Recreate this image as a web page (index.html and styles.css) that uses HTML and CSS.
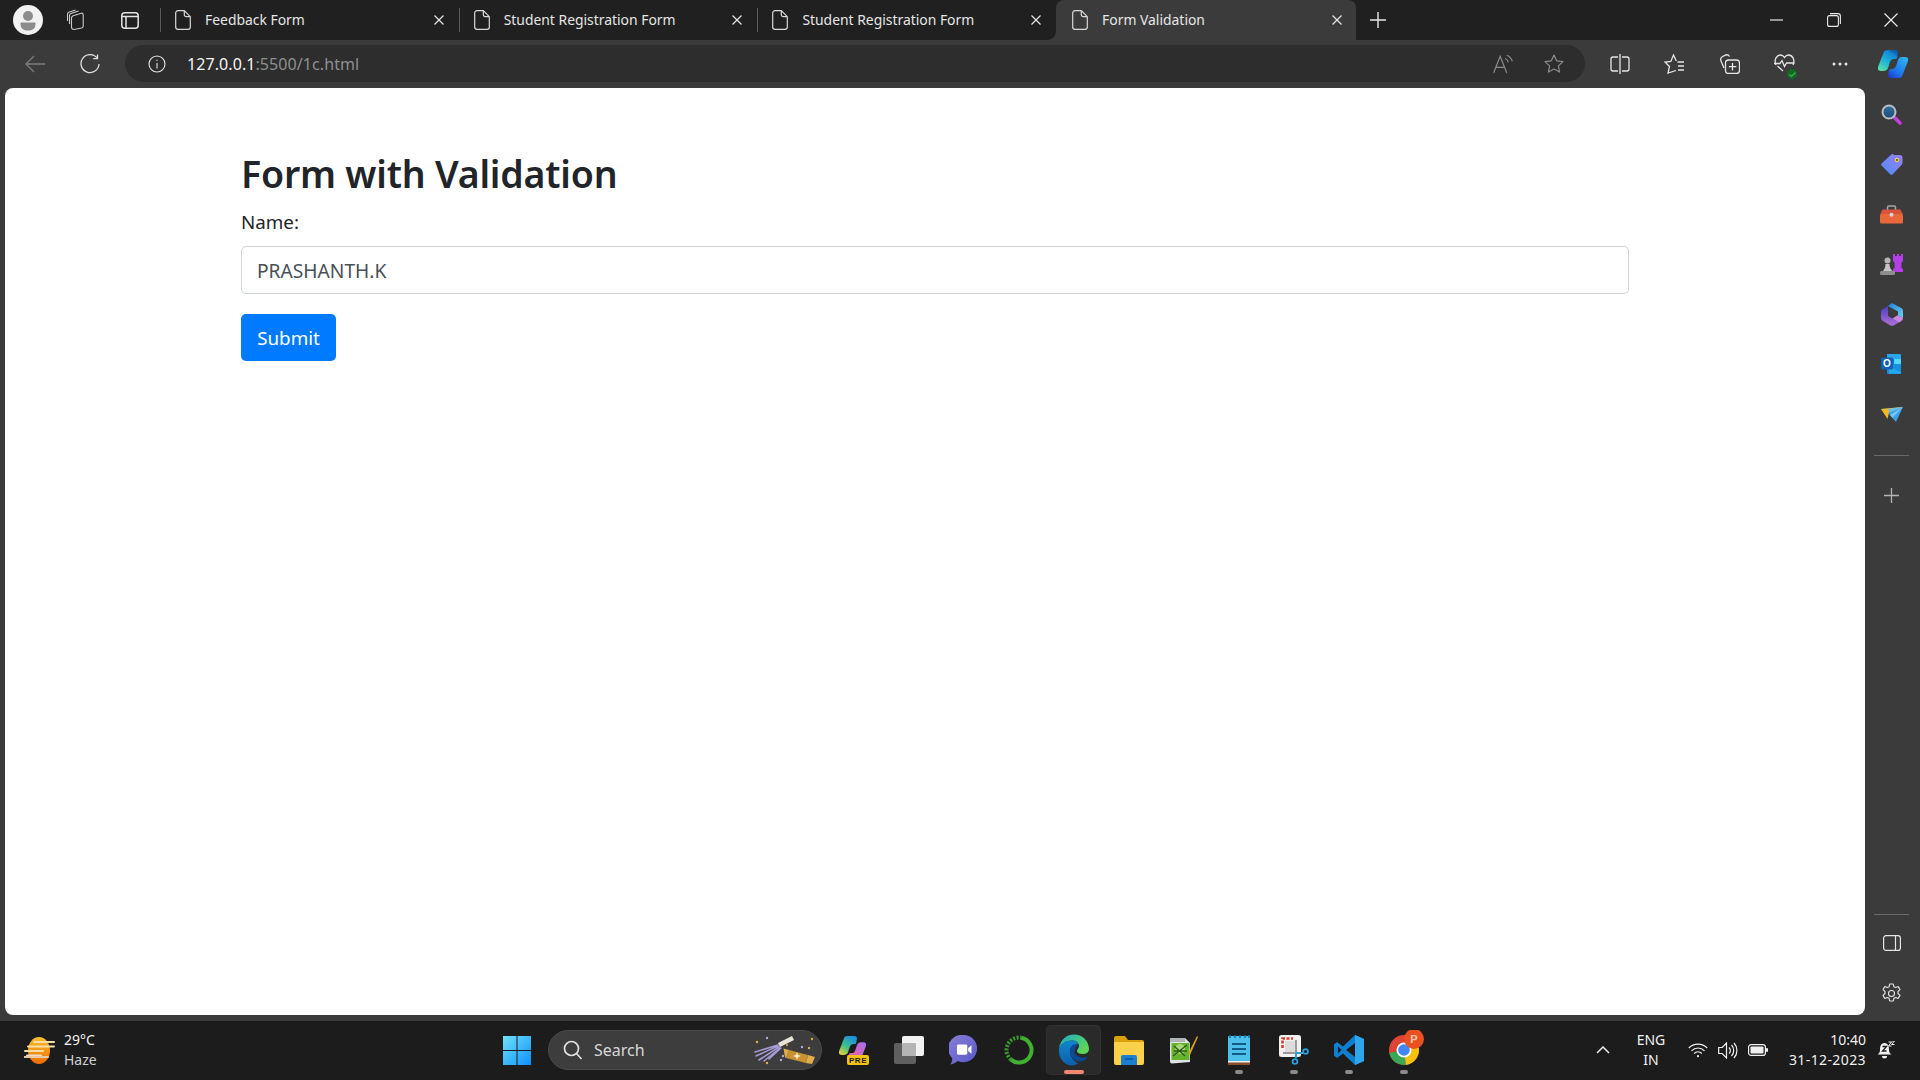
FILE: index.html
```html
<!DOCTYPE html>
<html lang="en">
<head>
<meta charset="utf-8">
<title>Form Validation</title>
<link rel="stylesheet" href="styles.css">
</head>
<body>
<svg class="sprite" aria-hidden="true">
  <symbol id="doc" viewBox="0 0 16 20"><path d="M3 .7h6.300l6 6V17a2.300 2.300 0 0 1-2.300 2.300H3A2.300 2.300 0 0 1 .7 17V3A2.300 2.300 0 0 1 3 .7ZM9.300 .7v4a2 2 0 0 0 2 2h4" fill="none" stroke="#d8d8d8" stroke-width="1.200"/></symbol>
  <symbol id="x" viewBox="0 0 10 10"><path d="M.5.5l9 9M9.500.5l-9 9" fill="none" stroke="#e6e6e6" stroke-width="1.200"/></symbol>
</svg>

<header class="tabstrip">
  <div class="avatar"><svg width="30" height="30" viewBox="0 0 30 30"><circle cx="15" cy="15" r="15" fill="#f2f2f2"/><circle cx="15" cy="11" r="5" fill="#8c8c8c"/><path d="M7.500 17.500h15v2a6 6 0 0 1-6 6h-3a6 6 0 0 1-6-6Z" fill="#8c8c8c"/></svg></div>
  <div class="strip-btn"><svg width="22" height="22" viewBox="0 0 22 22" fill="none" stroke="#c9c9c9" stroke-width="1.100"><path d="M8 20.500c-1.500 0-2.500-1-2.500-2.500V9c0-1.200.8-2 1.700-2.300l8-2.500c1-.3 2 .5 2 1.700v11c0 1-.6 1.800-1.500 2.100Z"/><path d="M3.500 15V6.500c0-1 .6-1.700 1.400-2l7.600-2.600M1.500 12V5c0-1 .5-1.500 1.300-1.800L9.500 1"/></svg></div>
  <div class="strip-btn narrow"><svg width="18" height="17" viewBox="0 0 18 17" fill="none" stroke="#e4e4e4" stroke-width="1.500"><rect x=".8" y=".8" width="16.400" height="15.400" rx="3"/><path d="M.8 4.500h16.400M5 4.500v11.700"/></svg></div>

  <div class="tab">
    <svg class="doc" width="16" height="20"><use href="#doc"/></svg>
    <span class="tab-title">Feedback Form</span>
    <svg class="tab-x" width="10" height="10"><use href="#x"/></svg>
  </div>
  <div class="tab">
    <svg class="doc" width="16" height="20"><use href="#doc"/></svg>
    <span class="tab-title">Student Registration Form</span>
    <svg class="tab-x" width="10" height="10"><use href="#x"/></svg>
  </div>
  <div class="tab">
    <svg class="doc" width="16" height="20"><use href="#doc"/></svg>
    <span class="tab-title">Student Registration Form</span>
    <svg class="tab-x" width="10" height="10"><use href="#x"/></svg>
  </div>
  <div class="tab active">
    <svg class="doc" width="16" height="20"><use href="#doc"/></svg>
    <span class="tab-title">Form Validation</span>
    <svg class="tab-x" width="10" height="10"><use href="#x"/></svg>
  </div>
  <div class="newtab"><svg width="16" height="16" viewBox="0 0 16 16"><path d="M8 0v16M0 8h16" stroke="#e8e8e8" stroke-width="1.400"/></svg></div>

  <div class="winctl">
    <div class="winbtn"><svg width="13" height="2" viewBox="0 0 13 2"><path d="M0 1h13" stroke="#e8e8e8" stroke-width="1.200"/></svg></div>
    <div class="winbtn"><svg width="14" height="14" viewBox="0 0 14 14" fill="none" stroke="#e8e8e8" stroke-width="1.100"><rect x=".6" y="2.600" width="10.800" height="10.800" rx="2"/><path d="M3 .6h8a2.400 2.400 0 0 1 2.400 2.400v8"/></svg></div>
    <div class="winbtn"><svg width="14" height="14" viewBox="0 0 14 14"><path d="M.5.500l13 13M13.500.5l-13 13" stroke="#e8e8e8" stroke-width="1.200"/></svg></div>
  </div>
</header>

<nav class="toolbar">
  <div class="tool"><svg width="20" height="18" viewBox="0 0 20 18" fill="none" stroke="#7d7d7d" stroke-width="1.300"><path d="M20 9H1M9 1 1 9l8 8"/></svg></div>
  <div class="tool"><svg width="20" height="20" viewBox="0 0 20 20" fill="none" stroke="#dcdcdc" stroke-width="1.300"><path d="M17.200 4.200A9 9 0 1 0 19 10"/><path d="M17.500 .5v4.200h-4.300"/></svg></div>
  <div class="addr">
    <svg class="info" width="18" height="18" viewBox="0 0 18 18" fill="none" stroke="#e6e6e6" stroke-width="1.100"><circle cx="9" cy="9" r="8"/><path d="M9 8v5.500M9 4.700v1.300"/></svg>
    <span class="url"><span class="host">127.0.0.1</span><span class="path">:5500/1c.html</span></span>
    <div class="addr-btn push"><svg width="22" height="20" viewBox="0 0 20 18" fill="none" stroke="#8c8c8c" stroke-width="1.100"><path d="M.6 17 6.500 2 12.500 17M2.700 12h7.700"/><path d="M11 4a5 5 0 0 1 3 3.500M12.500 1a8 8 0 0 1 5 5.500"/></svg></div>
    <div class="addr-btn"><svg width="20" height="19" viewBox="0 0 20 19" fill="none" stroke="#8c8c8c" stroke-width="1.200"><path d="m10 1 2.700 5.800 6.300.8-4.600 4.300 1.200 6.200L10 15l-5.600 3.100 1.200-6.200L1 7.600l6.300-.8Z" stroke-linejoin="round"/></svg></div>
  </div>
  <div class="tool first"><svg width="20" height="20" viewBox="0 0 20 20" fill="none" stroke="#e6e6e6" stroke-width="1.300"><path d="M8 3H3a2 2 0 0 0-2 2v10a2 2 0 0 0 2 2h5M12 3h5a2 2 0 0 1 2 2v10a2 2 0 0 1-2 2h-5M10 0v20"/></svg></div>
  <div class="tool"><svg width="21" height="20" viewBox="0 0 21 20" fill="none" stroke="#e6e6e6" stroke-width="1.300"><path d="M12 16.500 4 19l1.500-6.500L1 8l5.800-.6L9.500 1l2.800 6"/><path d="M13.500 8H20M14 12h6M14 16h6"/></svg></div>
  <div class="tool"><svg width="21" height="21" viewBox="0 0 21 21" fill="none" stroke="#e6e6e6" stroke-width="1.300"><path d="M5 15 2.200 8.500c-1-2.300-.6-4 1.300-5L6 2.300c1.600-.8 3.500-.4 4.500 1.200"/><rect x="6.500" y="7" width="14" height="13.500" rx="3"/><path d="M13.500 10v7.500M9.800 13.700h7.500"/></svg></div>
  <div class="tool"><svg width="21" height="20" viewBox="0 0 21 20" fill="none" stroke="#e6e6e6" stroke-width="1.300"><path d="M2 11C-.5 5.500 3 1 6.500 1c2 0 3 1 4 2.500C11.500 2 12.500 1 14.500 1 18 1 21.500 5.500 19 11"/><path d="M0 9.500h6l2-3 2.500 6 2-3.500h8M3.500 12l5.500 5"/></svg><span class="ok"><svg width="9" height="9" viewBox="0 0 9 9"><path d="m1.500 4.500 2 2 4-4" fill="none" stroke="#4fa35b" stroke-width="1.100"/></svg></span></div>
  <div class="tool"><svg width="16" height="4" viewBox="0 0 16 4" fill="#e6e6e6"><circle cx="2" cy="2" r="1.500"/><circle cx="8" cy="2" r="1.500"/><circle cx="14" cy="2" r="1.500"/></svg></div>
  <div class="tool copilot"><svg width="31" height="28" viewBox="0 0 31 28">
    <defs>
      <linearGradient id="cpA" x1=".1" y1="1" x2=".7" y2="0"><stop offset="0" stop-color="#5fe3a1"/><stop offset=".45" stop-color="#1fb5d6"/><stop offset=".85" stop-color="#1189d8"/><stop offset="1" stop-color="#0b5fb0"/></linearGradient>
      <linearGradient id="cpB" x1=".1" y1="1" x2=".8" y2="0"><stop offset="0" stop-color="#2337c6"/><stop offset=".3" stop-color="#1b6fe8"/><stop offset="1" stop-color="#2fb0f5"/></linearGradient>
    </defs>
    <path d="M6 1.500Q7 0 10 0h7q3 0 3 3l-1 5q-.5 1-2 1h-1q-3 0-4 3l-2 6q-1 3-5 3H3q-4 0-3-4Z" fill="url(#cpA)"/>
    <path d="M24 26.500q-1 1.500-4 1.500h-7q-3 0-3-3l1-5q.5-1 2-1h1q3 0 4-3l2-6q1-3 4-3h3q4 0 3 4Z" fill="url(#cpB)"/>
  </svg></div>
</nav>

<div class="main">
  <main class="page">
    <div class="container">
      <h2 class="title">Form with Validation</h2>
      <form class="form">
        <label class="label" for="name">Name:</label>
        <input class="control" id="name" type="text" value="PRASHANTH.K">
        <button class="submit" type="button">Submit</button>
      </form>
    </div>
  </main>
  <aside class="rail">
    <div class="rail-item"><svg width="21" height="21" viewBox="0 0 21 21"><defs><linearGradient id="lens" x1="0" y1="0" x2="0" y2="1"><stop offset="0" stop-color="#2f6f9e"/><stop offset="1" stop-color="#194c78"/></linearGradient></defs><path d="m13 13 6 6" stroke="#c53fdc" stroke-width="3.600" stroke-linecap="round"/><circle cx="8" cy="8" r="6.500" fill="url(#lens)" stroke="#b9bcc0" stroke-width="2"/></svg></div>
    <div class="rail-item"><svg width="22" height="21" viewBox="0 0 22 21"><defs><linearGradient id="tag" x1="0" y1="1" x2="1" y2="0"><stop offset="0" stop-color="#4c8df6"/><stop offset="1" stop-color="#9a7ff2"/></linearGradient></defs><path d="M12.500 1H19a2.500 2.500 0 0 1 2.500 2.500V9a3 3 0 0 1-1 2l-8.500 9a2 2 0 0 1-3 0l-8-8a2 2 0 0 1 0-3l8.500-7.800a3 3 0 0 1 3-1.200Z" fill="url(#tag)"/><circle cx="16" cy="6" r="2.200" fill="#f6cf3f"/><circle cx="16" cy="6" r=".9" fill="#3b3b3b"/></svg></div>
    <div class="rail-item"><svg width="23" height="19" viewBox="0 0 23 19"><path d="M7.500 5V2.500C7.500 1.500 8 1 9 1h5c1 0 1.500.5 1.500 1.500V5" fill="none" stroke="#a5a5a5" stroke-width="1.600"/><path d="M2.500 4.500h18L23 9.500H0Z" fill="#d8533a"/><rect y="9" width="23" height="9.500" rx="1.500" fill="#e8683c"/><circle cx="11.500" cy="9.800" r="2" fill="#d5d5d5"/></svg></div>
    <div class="rail-item"><svg width="23" height="23" viewBox="0 0 23 23"><path d="M13 1h2v2h2V1h2v2h2V1h2v7l-1.500 1.500V15l1.500 1v3H13v-3l1.500-1V9.500L13 8Z" fill="#b33fe6"/><circle cx="7.500" cy="7.500" r="3" fill="#b5b5b5"/><path d="M5.500 11h4c0 3 1 5 3 7H3c1.500-2 2.500-4 2.500-7Z" fill="#c4c4c4"/><rect y="18" width="15" height="4" rx="1.500" fill="#8e8e8e"/></svg></div>
    <div class="rail-item"><svg width="22" height="23" viewBox="0 0 22 23"><defs><linearGradient id="m1" x1="0" y1="0" x2="1" y2="1"><stop offset="0" stop-color="#1f7fdc"/><stop offset="1" stop-color="#6dd4f2"/></linearGradient><linearGradient id="m2" x1="0" y1="0" x2="0" y2="1"><stop offset="0" stop-color="#4a3fc4"/><stop offset="1" stop-color="#b16fd6"/></linearGradient></defs><path d="M11 0 20 5c1.300.7 2 1.800 2 3v7l-5-3V8.500L7 3Z" fill="url(#m1)"/><path d="M7 3 2 6C.7 6.800 0 8 0 9.500v5c0 1.500.7 2.700 2 3.500l7 4.200c1.200.7 2.700.7 4 0l5-3L7 13Z" fill="url(#m2)"/><path d="M17 12 22 15c0 1.500-.7 2.500-2 3.200l-2 1.200L11.500 15.500Z" fill="#c98be0"/></svg></div>
    <div class="rail-item"><svg width="21" height="20" viewBox="0 0 21 20"><path d="M6 0h12.500c1 0 1.500.5 1.500 1.500V6H6Z" fill="#28a8ea"/><path d="M6 5h7v5H6Z" fill="#0078d4"/><path d="M13 5h7v5h-7Z" fill="#50d9ff"/><path d="M6 10h14v10H7.500c-1 0-1.500-.5-1.500-1.500Z" fill="#1490df"/><path d="m8 13 12 5v1.500H8Z" fill="#28a8ea"/><rect y="3.500" width="12" height="12" rx="1.500" fill="#0f62b5"/><text class="ol-letter" x="6" y="13">O</text></svg></div>
    <div class="rail-item"><svg width="22" height="15" viewBox="0 0 22 15"><path d="M0 2 22 0 15 15 9 8Z" fill="#3b9fe8"/><path d="M22 0 9 8l2.500 3Z" fill="#75c5f7"/><path d="M0 2 22 0 8 5 6.500 12Z" fill="#f3b922"/><path d="M22 0 9 5.500 7 2Z" fill="#66bcf5"/></svg></div>
    <div class="rail-rule one"></div>
    <div class="rail-plus"><svg width="15" height="15" viewBox="0 0 15 15"><path d="M7.500 0v15M0 7.500h15" stroke="#b4b4b4" stroke-width="1.300"/></svg></div>
    <div class="rail-rule two"></div>
    <div class="rail-low"><svg width="18" height="16" viewBox="0 0 18 16" fill="none" stroke="#e4e4e4" stroke-width="1.200"><rect x=".6" y=".6" width="16.800" height="14.800" rx="2.500"/><path d="M12.500.6v14.800"/></svg></div>
    <div class="rail-low last"><svg width="21" height="21" viewBox="0 0 21 21" fill="none" stroke="#e4e4e4" stroke-width="1.100"><circle cx="10.500" cy="10.500" r="3"/><path d="M8.700 1h3.600l.6 2.700 1.800.9 2.500-1 1.800 3-2 1.900v2l2 1.900-1.800 3-2.500-1-1.800.9-.6 2.700H8.700l-.6-2.700-1.800-.9-2.500 1-1.800-3 2-1.900v-2l-2-1.900 1.800-3 2.500 1 1.800-.9Z" stroke-linejoin="round"/></svg></div>
  </aside>
</div>

<footer class="taskbar">
  <div class="weather">
    <svg width="31" height="27" viewBox="0 0 31 27"><defs><linearGradient id="sun" x1="0" y1="0" x2="0" y2="1"><stop offset="0" stop-color="#fbc02d"/><stop offset="1" stop-color="#ef6c00"/></linearGradient></defs><ellipse cx="15" cy="13.500" rx="11" ry="13.500" fill="url(#sun)"/><g stroke-linecap="round" stroke-width="2"><path d="M10 5h20M4 9.500h26M1 14h18" stroke="#f6dfa6"/><path d="M3 18.500h14" stroke="#efe1c4"/><path d="M0 20h24" stroke="#e8c9a0"/></g></svg>
    <div class="w-text"><span>29°C</span><span class="w-sub">Haze</span></div>
  </div>
  <div class="center">
    <div class="slot"><svg width="28" height="29" viewBox="0 0 28 29"><defs><linearGradient id="win" x1="0" y1="0" x2="1" y2="1"><stop offset="0" stop-color="#6fe2fb"/><stop offset="1" stop-color="#0f8ffa"/></linearGradient></defs><path d="M0 0h13.500v14H0ZM14.500 0H28v14H14.500ZM0 15h13.500v14H0ZM14.500 15H28v14H14.500Z" fill="url(#win)"/></svg></div>
    <div class="search">
      <svg width="20" height="20" viewBox="0 0 20 20" fill="none" stroke="#e0e0e0" stroke-width="1.700"><circle cx="8.500" cy="8.500" r="7"/><path d="m13.500 13.500 5 5.500"/></svg>
      <span class="search-text">Search</span>
      <svg class="doodle" width="82" height="40" viewBox="0 0 82 40">
        <g stroke="#a79bd6" stroke-width="1.500" stroke-linecap="round"><path d="M38 15 15 22M38 16 16 26M39 17 19 30M40 18 24 31M41 18 29 29"/></g>
        <path d="M53 8 39 15" stroke="#e8e2d8" stroke-width="4.500"/>
        <path d="M49 20 68 25 66 33 46 28Z" fill="#c9912f"/>
        <path d="M49 20 43.500 18.500 45 27 46 28ZM68 25 75 27 72 34 66 33Z" fill="#e0ad4a"/>
        <path d="m57 22 1 3 3 1-3 1-1 3-1-3-3-1 3-1Z" fill="#fbf2d6"/>
        <g fill="#e0ad4a"><circle cx="17" cy="12" r="1.200"/><circle cx="72" cy="9" r="1.200"/><circle cx="69" cy="18" r="1.200"/><circle cx="27" cy="33" r="1.200"/><circle cx="47" cy="15" r="1"/></g>
        <g fill="#b7a8d8"><circle cx="27" cy="8" r="1.200"/><circle cx="62" cy="17" r="1.200"/><circle cx="43" cy="26" r="1.200"/><circle cx="41" cy="30" r="1.200"/></g>
      </svg>
    </div>
    <div class="slot first-app"><svg width="30" height="29" viewBox="0 0 30 29"><defs><linearGradient id="cp2" x1=".1" y1="1" x2=".7" y2="0"><stop offset="0" stop-color="#f4d02a"/><stop offset=".45" stop-color="#3fc28a"/><stop offset="1" stop-color="#1a8fe0"/></linearGradient><linearGradient id="cp3" x1=".1" y1="1" x2=".9" y2="0"><stop offset="0" stop-color="#f0608f"/><stop offset="1" stop-color="#a96ef0"/></linearGradient></defs><g transform="scale(.9)"><path d="M6 1.500Q7 0 10 0h7q3 0 3 3l-1 5q-.5 1-2 1h-1q-3 0-4 3l-2 6q-1 3-5 3H3q-4 0-3-4Z" fill="url(#cp2)"/><path d="M24 26.500q-1 1.500-4 1.500h-7q-3 0-3-3l1-5q.5-1 2-1h1q3 0 4-3l2-6q1-3 4-3h3q4 0 3 4Z" fill="url(#cp3)"/></g><rect x="8" y="19" width="22" height="10" rx="2" fill="#f5c211"/><text class="pre" x="19" y="27">PRE</text></svg></div>
    <div class="slot"><svg width="30" height="29" viewBox="0 0 30 29"><rect y="7" width="22" height="21" rx="2" fill="#5f5f5f"/><rect x="8" width="22" height="20" rx="2" fill="#f2f2f2"/><rect x="8" y="7" width="14" height="13" rx="1" fill="#b5b5b5"/></svg></div>
    <div class="slot"><svg width="29" height="30" viewBox="0 0 29 32"><defs><linearGradient id="meet" x1="0" y1="0" x2="1" y2="1"><stop offset="0" stop-color="#8a7ed8"/><stop offset="1" stop-color="#5558c8"/></linearGradient></defs><path d="M14.500 0a14.500 14.500 0 1 1-6 27.700C6 29.500 3.500 31 .5 31.500c1.500-2 2-4.200 2-6.700A14.500 14.500 0 0 1 14.500 0Z" fill="url(#meet)"/><rect x="7.500" y="10" width="11" height="11" rx="1.500" fill="#fff"/><path d="M19.500 14l3.500-3v9l-3.500-3Z" fill="#fff"/></svg></div>
    <div class="slot"><svg width="30" height="30" viewBox="0 0 30 30" fill="none" stroke-width="4"><path d="M17.200 2.700A12.500 12.500 0 1 1 7 24.600" stroke="#3fb02f"/><path d="M7 24.600A12.500 12.500 0 0 1 17.200 2.700" stroke="#3a9a2c" stroke-dasharray="2 1.500"/></svg></div>
    <div class="slot current"><svg width="30" height="32" viewBox="0 0 30 31"><defs><linearGradient id="e1" x1="0" y1="0" x2="1" y2=".7"><stop offset="0" stop-color="#1fa8d0"/><stop offset="1" stop-color="#5fd94f"/></linearGradient><linearGradient id="e2" x1="0" y1="0" x2="0" y2="1"><stop offset="0" stop-color="#0f87cd"/><stop offset="1" stop-color="#0d5fab"/></linearGradient></defs><path d="M15 0C23 0 30 6 30 14.500c0 3-2.500 5-6.500 5-3 0-5.500-1-5.500-3 0-2 2-2.500 2-5C20 8 17 6 13 6 7 6 2 9 0 14 1 6 7 0 15 0Z" fill="url(#e1)"/><path d="M0 14C2 9 7 6 13 6c4 0 6 2 6 4-5-1-8 3-8 7 0 5 3 9 8 12-2 1-4 2-6 2C5 31-1 23 0 14Z" fill="url(#e2)"/><path d="M19 10c-5-1-8 3-8 7 0 5 4 9 9 10 4 0 7-2 9-5-3 1.500-7 1.500-10 0-3-1.500-4-4-3-7 .5-2 2-3.500 3-5Z" fill="#0a4a96"/></svg><i class="bar active-bar"></i></div>
    <div class="slot"><svg width="30" height="30" viewBox="0 0 30 30"><path d="M0 3a2 2 0 0 1 2-2h9l3 4h14a2 2 0 0 1 2 2v3H0Z" fill="#dba10c"/><path d="M0 7h30v21a2 2 0 0 1-2 2H2a2 2 0 0 1-2-2Z" fill="#fbd14b"/><path d="M7 22a2 2 0 0 1 2-2h12a2 2 0 0 1 2 2v8H7Z" fill="#1a7fd0"/><path d="M11 24h8" stroke="#0f4f8f" stroke-width="1.500"/></svg></div>
    <div class="slot npp"><svg width="28" height="28" viewBox="0 0 28 28"><path d="M0 2h15l5 5v19l-18 1.500a2 2 0 0 1-2-2Z" fill="#dfe3e3"/><rect x="1.500" y="7" width="18" height="17" fill="#66b32e"/><circle cx="10" cy="13" r="5" fill="#a8d67a"/><path d="M3 20 17 9M4 10l11 10M4 15h13" stroke="#2d5e13" stroke-width="1.300"/><path d="M0 2h15v4H0Z" fill="#aeb3b5"/><path d="M27 0l1 1-8 18-2-1Z" fill="#d99f27"/></svg></div>
    <div class="slot"><svg width="22" height="30" viewBox="0 0 22 30"><rect y="1" width="22" height="26" rx="1" fill="#4cc0ea"/><rect y="27" width="22" height="3" fill="#8a4f2a"/><rect y="26" width="22" height="1.500" fill="#eee"/><path d="M4 9h14M4 14h14M4 19h14" stroke="#115c85" stroke-width="2"/><path d="M2 0v3M7 0v3M12 0v3M17 0v3M21 0v3" stroke="#1a6f9f" stroke-width="1.500"/></svg><i class="bar"></i></div>
    <div class="slot"><svg width="30" height="30" viewBox="0 0 30 30"><rect width="22" height="22" rx="2.500" fill="#f1f1f1"/><rect x="6" y="6" width="11" height="12" fill="#dcdcdc"/><path d="M3.500 13V3.500H14" fill="none" stroke="#d9412f" stroke-width="2.600" stroke-dasharray="3 1.500"/><path d="M17 5v13M4 18h20" stroke="#9b9b9b" stroke-width="2"/><path d="M17 18h6" stroke="#2b9fe0" stroke-width="2"/><path d="M17 18v5" stroke="#2b9fe0" stroke-width="2"/><circle cx="26.500" cy="16.500" r="2.400" fill="none" stroke="#2b9fe0" stroke-width="1.800"/><circle cx="16" cy="26.500" r="2.400" fill="none" stroke="#2b9fe0" stroke-width="1.800"/></svg><i class="bar"></i></div>
    <div class="slot"><svg width="30" height="30" viewBox="0 0 30 30"><path d="M21 0 30 4v22l-9 4-12-11.500L3 23l-3-2.500V9.500L3 7l6 4.500Z" fill="#0e7fd0"/><path d="M21 0 30 4v22l-9 4Z" fill="#2ea6ee"/><path d="M21 8 12 15l9 7Z" fill="#1c1c1c"/><path d="M4 11.500v7l3.500-3.500Z" fill="#1c1c1c"/></svg><i class="bar"></i></div>
    <div class="slot"><svg width="40" height="40" viewBox="0 0 40 40"><circle cx="20" cy="20" r="15" fill="#db4437"/><path d="M20 20 5.300 23A15 15 0 0 0 22 34.900Z" fill="#3aa757"/><path d="M20 20 22 34.900A15 15 0 0 0 34.500 16Z" fill="#f4c20d"/><circle cx="20" cy="20" r="7.500" fill="#fff"/><circle cx="20" cy="20" r="5.800" fill="#4285f4"/><circle cx="30" cy="9" r="10" fill="#e9511f"/><text class="badge-p" x="30" y="13">P</text></svg><i class="bar"></i></div>
  </div>
  <div class="tray">
    <div class="chev"><svg width="14" height="8" viewBox="0 0 14 8"><path d="m1 7 6-6 6 6" fill="none" stroke="#ededed" stroke-width="1.500"/></svg></div>
    <div class="lang"><span>ENG</span><span>IN</span></div>
    <div class="sys"><svg width="20" height="15" viewBox="0 0 20 15" fill="none" stroke="#f0f0f0" stroke-width="1.200"><path d="M.8 5a13 13 0 0 1 18.400 0M3.500 7.800a9 9 0 0 1 13 0M6.200 10.500a5 5 0 0 1 7.600 0"/><circle cx="10" cy="13.200" r="1.100" fill="#f0f0f0" stroke="none"/></svg></div>
    <div class="sys"><svg width="20" height="17" viewBox="0 0 20 17" fill="none" stroke="#f0f0f0" stroke-width="1.200"><path d="M.7 5.500h3.500L8.500 1v15L4.200 11.500H.7ZM11 5.500a4 4 0 0 1 0 6M13.500 3a8 8 0 0 1 0 11M16 1a11 11 0 0 1 0 15"/></svg></div>
    <div class="sys"><svg width="20" height="12" viewBox="0 0 20 12"><rect x=".6" y=".6" width="16.800" height="10.800" rx="2.500" fill="none" stroke="#f0f0f0" stroke-width="1.200"/><rect x="2.500" y="2.500" width="13" height="7" rx="1" fill="#f0f0f0"/><rect x="18" y="4" width="2" height="4" rx="1" fill="#f0f0f0"/></svg></div>
    <div class="clock"><span>10:40</span><span class="date">31-12-2023</span></div>
    <div class="bell"><svg width="18" height="19" viewBox="0 0 18 19"><path d="M7.500 2C3.500 2 3 6 3 9c0 2-1 3.500-2.500 4.500h14C13 12.500 12 11 12 9c0-3-.5-7-4.500-7Z" fill="#f0f0f0"/><path d="M5 15h5a2.500 2.500 0 0 1-5 0Z" fill="#f0f0f0"/><path d="M5.500 5.500h4l-4 4.500h4" fill="none" stroke="#1c1c1c" stroke-width="1.300"/><path d="M11.500 1h3l-3 4h3M14.500 0h3l-3 3.500h3" fill="none" stroke="#f0f0f0" stroke-width="1"/></svg></div>
  </div>
</footer>
</body>
</html>
```
FILE: styles.css
```css
* { box-sizing: border-box; }
html, body { height: 100%; }
body {
  margin: 0;
  height: 100vh;
  overflow: hidden;
  display: flex;
  flex-direction: column;
  background: #3b3b3b;
  font-family: "Noto Sans", "Open Sans", sans-serif;
  color: #e8e8e8;
}
.sprite { width: 0; height: 0; position: absolute; }

/* tab strip */
.tabstrip { height: 40px; flex: none; display: flex; align-items: stretch; background: #202020; padding-left: 13px; }
.avatar { width: 30px; display: flex; align-items: center; margin-right: 17px; }
.strip-btn { width: 34px; display: flex; align-items: center; justify-content: center; }
.strip-btn.narrow { width: 36px; margin-left: 18px; margin-right: 12px; }
.tab { width: 298.700px; flex: none; display: flex; align-items: center; padding: 0 15px 1px 15px; position: relative; font-size: 13.900px; }
.tab::after { content: ""; position: absolute; left: 0; top: 8px; bottom: 8px; width: 1px; background: #5a5a5a; }
.tab.active { width: 300px; background: #3b3b3b; border-radius: 8px 8px 0 0; padding: 0 14px 1px 16px; }
.tab.active::after { display: none; }
.tab.active::before {
  content: "";
  position: absolute;
  left: -8px;
  bottom: 0;
  width: 8px;
  height: 8px;
  background: radial-gradient(circle at 0 0, #202020 7.500px, #3b3b3b 8px);
}
.doc { flex: none; }
.tab-title { margin-left: 14px; flex: 1; white-space: nowrap; color: #e6e6e6; }
.tab-x { flex: none; }
.newtab { width: 44px; display: flex; align-items: center; justify-content: center; }
.winctl { margin-left: auto; display: flex; }
.winbtn { width: 57.600px; display: flex; align-items: center; justify-content: center; }

/* toolbar */
.toolbar { height: 48px; flex: none; display: flex; align-items: flex-start; padding: 5px 0 0 7px; background: #3b3b3b; }
.tool { width: 55px; height: 37px; display: flex; align-items: center; justify-content: center; position: relative; flex: none; }
.tool.first { margin-left: 7px; }
.tool.copilot { margin-left: -1px; }
.addr { width: 1460px; height: 37px; margin-left: 8px; background: #2d2d2d; border-radius: 19px; display: flex; align-items: center; padding: 0 6px 0 23px; flex: none; }
.info { flex: none; }
.url { margin-left: 21px; font-size: 16px; letter-spacing: .08px; }
.host { color: #f4f4f4; }
.path { color: #8f8f8f; }
.addr-btn { width: 50px; height: 37px; display: flex; align-items: center; justify-content: center; }
.push { margin-left: auto; }
.ok { position: absolute; right: 15px; bottom: 3px; width: 10px; height: 10px; border-radius: 50%; background: #0f6b1f; display: flex; align-items: center; justify-content: center; }

/* main */
.main { flex: 1; display: flex; min-height: 0; padding-left: 5px; }
.page { flex: 1; margin-bottom: 6px; background: #fff; border-radius: 8px; padding: 63px 236px 0; }
.container { width: 1388px; }
.title { margin: 0 0 11px; font-size: 37.500px; line-height: 46px; font-weight: 600; letter-spacing: -.2px; color: #212529; }
.form { display: flex; flex-direction: column; align-items: flex-start; }
.label { font-size: 18.800px; line-height: 29px; color: #212529; margin-bottom: 9px; }
.control { width: 100%; height: 48px; padding: 0 15px; border: 1px solid #ced4da; border-radius: 5px; font: 19.200px "Noto Sans", sans-serif; color: #495057; background: #fff; }
.submit { margin-top: 20px; width: 95px; height: 47px; border: 0; border-radius: 5px; background: #007bff; color: #fff; font: 18.800px "Noto Sans", sans-serif; }

/* side rail */
.rail { width: 55px; flex: none; display: flex; flex-direction: column; align-items: center; padding: 1px 2px 0 0; }
.rail-item { height: 50px; width: 100%; flex: none; display: flex; align-items: center; justify-content: center; }
.rail-rule { width: 35px; height: 1px; background: #6a6a6a; flex: none; }
.rail-rule.one { margin-top: 16px; }
.rail-rule.two { margin-top: auto; }
.rail-plus { margin-top: 31px; height: 17px; display: flex; align-items: center; }
.rail-low { height: 50px; display: flex; align-items: center; flex: none; margin-top: 3px; }
.rail-low.last { margin-top: 0; margin-bottom: 3px; }
.ol-letter { font: 700 10px "Liberation Sans", sans-serif; fill: #fff; text-anchor: middle; }

/* taskbar */
.taskbar { height: 59px; flex: none; display: flex; align-items: center; padding: 4px 0 5px; background: #1c1c1c; color: #f0f0f0; font-size: 14px; }
.weather { width: 489px; flex: none; display: flex; align-items: center; padding-left: 24px; gap: 9px; }
.w-text { display: flex; flex-direction: column; line-height: 20px; }
.w-sub { color: #cfcfcf; }
.center { display: flex; align-items: center; flex: none; }
.slot { width: 55px; height: 50px; flex: none; display: flex; align-items: center; justify-content: center; position: relative; }
.first-app { margin-left: 4px; }
.current { background: #2a2a2a; border-radius: 5px; box-shadow: inset 0 0 0 1px #313131; }
.bar { position: absolute; left: 50%; bottom: 1px; width: 8px; height: 4px; margin-left: -4px; border-radius: 2px; background: #8a8a8a; }
.active-bar { width: 20px; margin-left: -10px; background: #f08672; }
.search { width: 274px; height: 40px; margin-left: 4px; flex: none; display: flex; align-items: center; padding-left: 14px; background: #3d3d3d; border: 1px solid #4a4a4a; border-radius: 20px; position: relative; }
.search-text { margin-left: 11px; font-size: 16px; color: #d8d8d8; }
.doodle { position: absolute; right: -1px; top: -1px; }
.pre { font: 700 8px "Liberation Sans", sans-serif; fill: #1c1c1c; text-anchor: middle; letter-spacing: .5px; }
.badge-p { font: 700 11px "Liberation Sans", sans-serif; fill: #f7c6b0; text-anchor: middle; }
.tray { margin-left: auto; display: flex; align-items: center; padding-right: 22px; }
.chev { width: 40px; display: flex; justify-content: center; }
.lang { width: 56px; display: flex; flex-direction: column; align-items: center; line-height: 20px; margin-right: 4px; }
.sys { width: 30px; display: flex; justify-content: center; }
.clock { width: 93px; display: flex; flex-direction: column; align-items: flex-end; line-height: 20px; white-space: nowrap; }
.date { letter-spacing: .4px; }
.bell { width: 24px; margin-left: 8px; display: flex; justify-content: center; }
```
